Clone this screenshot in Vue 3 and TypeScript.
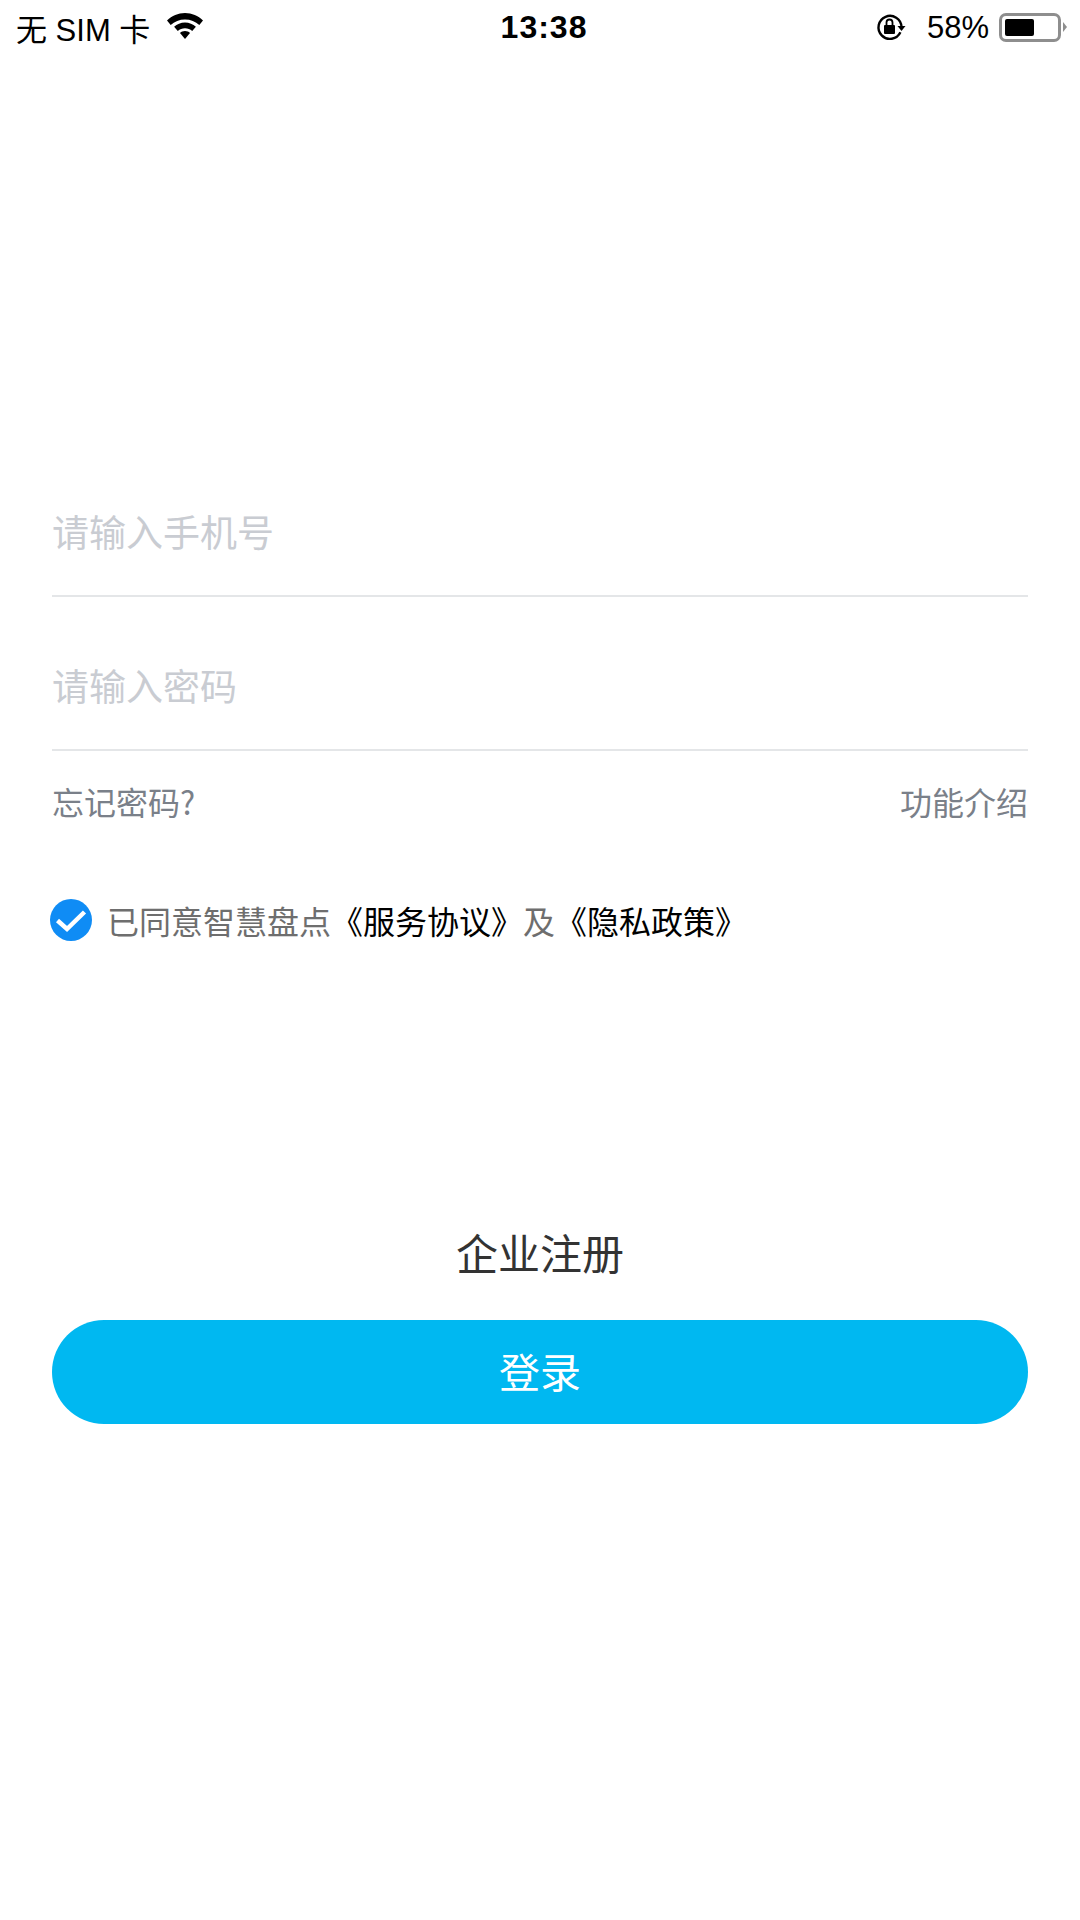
<script setup lang="ts">
const fields = ['请输入手机号', '请输入密码']
</script>

<template>
  <div class="page">
    <div class="status-bar">
      <div class="status-left">
        <span>无 SIM 卡</span>
        <svg class="wifi" width="38" height="28" viewBox="0 0 38 28">
          <path d="M19 1C12 1 6 3.800 1 8.500L4.700 13C8.500 9.500 13.500 7.500 19 7.500s10.500 2 14.300 5.500L37 8.500C32 3.800 26 1 19 1z" />
          <path d="M19 10.500c-4.200 0-8 1.600-10.900 4.300l3.700 4.200c2-1.700 4.400-2.700 7.200-2.700s5.200 1 7.200 2.700l3.700-4.200C27 12.100 23.200 10.500 19 10.500z" />
          <path d="M19 19c-2 0-3.700.7-5 1.900L19 27l5-6.100c-1.300-1.200-3-1.900-5-1.900z" />
        </svg>
      </div>
      <span class="time">13:38</span>
      <div class="status-right">
        <svg class="lock" width="30" height="28" viewBox="0 0 30 28">
          <path d="M24.400 19.300A11.500 11.500 0 1 1 25.500 14" fill="none" stroke="#000" stroke-width="2.400" />
          <path d="M21.500 13h8l-4 5z" />
          <rect x="8" y="12" width="11" height="9" rx="1" />
          <path d="M10.500 12V9.500a3 3 0 0 1 6 0V12" fill="none" stroke="#000" stroke-width="1.800" />
        </svg>
        <span class="percent">58%</span>
        <div class="battery">
          <div class="battery-body"><div class="battery-fill"></div></div>
          <div class="battery-cap"></div>
        </div>
      </div>
    </div>

    <div class="form">
      <div v-for="f in fields" :key="f" class="field">{{ f }}</div>

      <div class="links">
        <span>忘记密码?</span>
        <span>功能介绍</span>
      </div>

      <div class="agree">
        <svg width="42" height="42" viewBox="0 0 42 42">
          <circle cx="21" cy="21" r="21" fill="#0f8cf5" />
          <path d="M7.500 21.500l9.500 8.500L34.500 13" fill="none" stroke="#fff" stroke-width="4.500" />
        </svg>
        <p>已同意智慧盘点<b>《服务协议》</b>及<b>《隐私政策》</b></p>
      </div>

      <div class="register">企业注册</div>
      <button class="login">登录</button>
    </div>
  </div>
</template>

<style scoped>
.page {
  width: 1080px;
  height: 1920px;
  background: #fff;
  font-family: "Noto Sans CJK SC", "Liberation Sans", sans-serif;
  overflow: hidden;
}

.status-bar {
  height: 54px;
  padding: 0 13px 0 16px;
  display: grid;
  grid-template-columns: 1fr auto 1fr;
  align-items: center;
  font-family: "Liberation Sans", "Noto Sans CJK SC", sans-serif;
  font-size: 31px;
  color: #000;
}

.status-left {
  display: flex;
  align-items: center;
  gap: 16px;
}

.wifi {
  margin-top: -2px;
}

.time {
  font-weight: 700;
  font-size: 32px;
  letter-spacing: 1px;
  margin: 1px 0 0 5px;
}

.status-right {
  display: flex;
  align-items: center;
  justify-content: flex-end;
  gap: 10px;
}

.percent {
  margin-top: 1px;
}

.lock {
  margin-right: 11px;
}

.battery {
  display: flex;
  align-items: center;
  gap: 2px;
}

.battery-body {
  width: 62px;
  height: 29px;
  box-sizing: border-box;
  border: 3px solid #8e8e8e;
  border-radius: 7px;
  padding: 3px;
}

.battery-fill {
  width: 58%;
  height: 100%;
  background: #000;
  border-radius: 2px;
}

.battery-cap {
  width: 0;
  height: 0;
  border-left: 4px solid #8e8e8e;
  border-top: 5px solid transparent;
  border-bottom: 5px solid transparent;
}

.form {
  padding: 0 52px;
  margin-top: 417px;
}

.field {
  height: 154px;
  box-sizing: border-box;
  border-bottom: 2px solid #e4e6e8;
  color: #c9ccd2;
  font-size: 37px;
  line-height: 52px;
  padding-top: 62px;
}

.field:first-child {
  height: 126px;
  padding-top: 34px;
}

.links {
  display: flex;
  justify-content: space-between;
  font-size: 32px;
  line-height: 44px;
  color: #7a8089;
  margin-top: 28px;
}

.agree {
  display: flex;
  align-items: center;
  gap: 15px;
  margin: 75px 0 0 -2px;
}

.agree p {
  margin: 0;
  font-size: 32px;
  line-height: 44px;
  color: #6e6e6e;
}

.agree b {
  font-weight: 400;
  color: #000;
}

.register {
  text-align: center;
  font-size: 42px;
  line-height: 60px;
  color: #333;
  margin-top: 280px;
}

.login {
  display: block;
  width: 100%;
  height: 104px;
  margin-top: 38px;
  padding: 0 0 4px;
  border: 0;
  border-radius: 52px;
  background: #00b8f1;
  color: #fff;
  font-family: inherit;
  font-size: 41px;
}
</style>
